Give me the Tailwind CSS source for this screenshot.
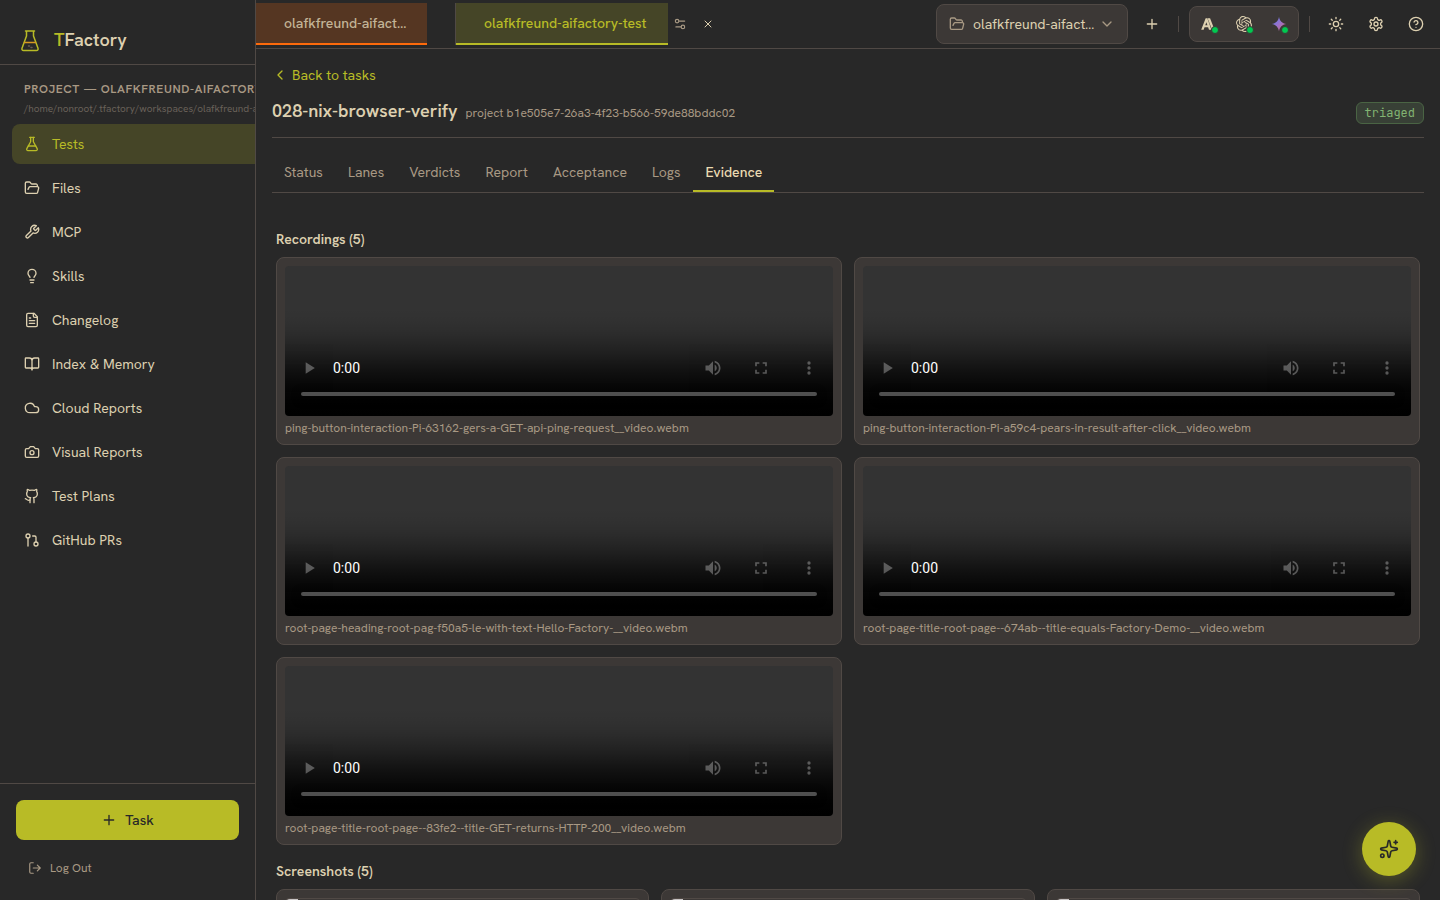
<!DOCTYPE html>
<html lang="en">
<head>
  <meta charset="UTF-8" />
  <meta name="viewport" content="width=device-width, initial-scale=1.0">
  <title>TFactory</title>
  <script src="https://cdn.jsdelivr.net/npm/@tailwindcss/browser@4"></script>
</head>
<body class="bg-[#282828] text-[#ddd0b0] font-['Hanken_Grotesk',Roboto,sans-serif] text-sm h-screen flex overflow-hidden">

  <!-- Sidebar -->
  <aside class="w-64 shrink-0 flex flex-col border-r border-[#504945] overflow-hidden">
    <div class="h-[65px] shrink-0 flex items-center gap-3 pl-[18px] pt-4 border-b border-[#504945]">
      <svg class="size-6" viewBox="0 0 24 24" fill="none" stroke="#b8bb26" stroke-width="1.5" stroke-linecap="round" stroke-linejoin="round">
        <path d="M7.500 3h9M8.500 3v5L4 20.200c-.4 1.200.3 2.300 1.500 2.300h13c1.200 0 1.900-1.100 1.500-2.300L15.500 8V3" />
        <path d="M6.500 14.500h11" stroke="#d79921" />
        <path d="M10.500 18h1M13 19.500h1" stroke="#665c54" />
      </svg>
      <span class="text-lg font-semibold"><span class="text-[#b8bb26]">T</span>Factory</span>
    </div>

    <div class="flex-1 pl-3 pt-4">
      <div class="pl-3 whitespace-nowrap">
        <h2 class="text-xs leading-4 font-semibold tracking-wider text-[#a89984]">PROJECT — OLAFKFREUND-AIFACTORY-TEST</h2>
        <p class="text-[10px] leading-[15px] mt-1 text-[#686159]">/home/nonroot/.tfactory/workspaces/olafkfreund-aifactory-test</p>
      </div>
      <nav class="mt-2 flex flex-col gap-1">
        <a href="#" class="h-10 flex items-center gap-3 px-3 rounded-l-lg bg-[#454527] text-[#b8bb26]">
          <svg class="size-4" viewBox="0 0 24 24" fill="none" stroke="currentColor" stroke-width="2" stroke-linecap="round" stroke-linejoin="round"><path d="M14 2v6a2 2 0 0 0 .245.960l5.510 10.080A2 2 0 0 1 18 22H6a2 2 0 0 1-1.755-2.960l5.510-10.080A2 2 0 0 0 10 8V2" /><path d="M6.453 15h11.094M8.500 2h7" /></svg>
          Tests
        </a>
        <a href="#" class="h-10 flex items-center gap-3 px-3">
          <svg class="size-4" viewBox="0 0 24 24" fill="none" stroke="currentColor" stroke-width="2" stroke-linecap="round" stroke-linejoin="round"><path d="m6 14 1.500-2.900A2 2 0 0 1 9.240 10H20a2 2 0 0 1 1.940 2.500l-1.540 6a2 2 0 0 1-1.950 1.500H4a2 2 0 0 1-2-2V5a2 2 0 0 1 2-2h3.900a2 2 0 0 1 1.690.9l.81 1.200a2 2 0 0 0 1.670.9H18a2 2 0 0 1 2 2v2" /></svg>
          Files
        </a>
        <a href="#" class="h-10 flex items-center gap-3 px-3">
          <svg class="size-4" viewBox="0 0 24 24" fill="none" stroke="currentColor" stroke-width="2" stroke-linecap="round" stroke-linejoin="round"><path d="M14.700 6.300a1 1 0 0 0 0 1.400l1.600 1.600a1 1 0 0 0 1.400 0l3.770-3.770a6 6 0 0 1-7.940 7.940l-6.910 6.910a2.120 2.120 0 0 1-3-3l6.910-6.910a6 6 0 0 1 7.940-7.940l-3.760 3.760z" /></svg>
          MCP
        </a>
        <a href="#" class="h-10 flex items-center gap-3 px-3">
          <svg class="size-4" viewBox="0 0 24 24" fill="none" stroke="currentColor" stroke-width="2" stroke-linecap="round" stroke-linejoin="round"><path d="M15 14c.2-1 .7-1.700 1.500-2.500 1-.9 1.500-2.200 1.500-3.500A6 6 0 0 0 6 8c0 1 .2 2.200 1.500 3.500.7.7 1.300 1.500 1.500 2.500M9 18h6M10 22h4" /></svg>
          Skills
        </a>
        <a href="#" class="h-10 flex items-center gap-3 px-3">
          <svg class="size-4" viewBox="0 0 24 24" fill="none" stroke="currentColor" stroke-width="2" stroke-linecap="round" stroke-linejoin="round"><path d="M15 2H6a2 2 0 0 0-2 2v16a2 2 0 0 0 2 2h12a2 2 0 0 0 2-2V7Z" /><path d="M14 2v4a2 2 0 0 0 2 2h4M10 9H8M16 13H8M16 17H8" /></svg>
          Changelog
        </a>
        <a href="#" class="h-10 flex items-center gap-3 px-3">
          <svg class="size-4" viewBox="0 0 24 24" fill="none" stroke="currentColor" stroke-width="2" stroke-linecap="round" stroke-linejoin="round"><path d="M12 7v14M3 18a1 1 0 0 1-1-1V4a1 1 0 0 1 1-1h5a4 4 0 0 1 4 4 4 4 0 0 1 4-4h5a1 1 0 0 1 1 1v13a1 1 0 0 1-1 1h-6a3 3 0 0 0-3 3 3 3 0 0 0-3-3z" /></svg>
          Index &amp; Memory
        </a>
        <a href="#" class="h-10 flex items-center gap-3 px-3">
          <svg class="size-4" viewBox="0 0 24 24" fill="none" stroke="currentColor" stroke-width="2" stroke-linecap="round" stroke-linejoin="round"><path d="M17.500 19H9a7 7 0 1 1 6.710-9h1.790a4.500 4.500 0 1 1 0 9Z" /></svg>
          Cloud Reports
        </a>
        <a href="#" class="h-10 flex items-center gap-3 px-3">
          <svg class="size-4" viewBox="0 0 24 24" fill="none" stroke="currentColor" stroke-width="2" stroke-linecap="round" stroke-linejoin="round"><path d="M14.500 4h-5L7 7H4a2 2 0 0 0-2 2v9a2 2 0 0 0 2 2h16a2 2 0 0 0 2-2V9a2 2 0 0 0-2-2h-3l-2.500-3z" /><circle cx="12" cy="13" r="3" /></svg>
          Visual Reports
        </a>
        <a href="#" class="h-10 flex items-center gap-3 px-3">
          <svg class="size-4" viewBox="0 0 24 24" fill="none" stroke="currentColor" stroke-width="2" stroke-linecap="round" stroke-linejoin="round"><path d="M15 22v-4a4.800 4.800 0 0 0-1-3.500c3 0 6-2 6-5.500.080-1.250-.270-2.480-1-3.500.280-1.150.280-2.350 0-3.500 0 0-1 0-3 1.500-2.640-.5-5.360-.5-8 0C6 2 5 2 5 2c-.3 1.150-.3 2.350 0 3.500A5.403 5.403 0 0 0 4 9c0 3.500 3 5.500 6 5.500-.390.490-.680 1.050-.850 1.650-.170.600-.220 1.230-.150 1.850v4" /><path d="M9 18c-4.510 2-5-2-7-2" /></svg>
          Test Plans
        </a>
        <a href="#" class="h-10 flex items-center gap-3 px-3">
          <svg class="size-4" viewBox="0 0 24 24" fill="none" stroke="currentColor" stroke-width="2" stroke-linecap="round" stroke-linejoin="round"><circle cx="18" cy="18" r="3" /><circle cx="6" cy="6" r="3" /><path d="M13 6h3a2 2 0 0 1 2 2v7M6 9v12" /></svg>
          GitHub PRs
        </a>
      </nav>
    </div>

    <div class="border-t border-[#504945] p-4">
      <button class="w-full h-10 rounded-lg bg-[#b8bb26] text-[#282828] font-medium flex items-center justify-center gap-2">
        <svg class="size-4" viewBox="0 0 24 24" fill="none" stroke="currentColor" stroke-width="2" stroke-linecap="round"><path d="M5 12h14M12 5v14" /></svg>
        Task
      </button>
      <button class="mt-3 h-8 px-3 flex items-center gap-2 text-xs text-[#a89984]">
        <svg class="size-[14px]" viewBox="0 0 24 24" fill="none" stroke="currentColor" stroke-width="2" stroke-linecap="round" stroke-linejoin="round"><path d="M9 21H5a2 2 0 0 1-2-2V5a2 2 0 0 1 2-2h4M16 17l5-5-5-5M21 12H9" /></svg>
        Log Out
      </button>
    </div>
  </aside>

  <div class="flex-1 min-w-0 flex flex-col">
    <!-- Top bar -->
    <header class="h-[49px] shrink-0 flex items-center border-b border-[#504945] pr-2">
      <div class="flex items-center flex-1 min-w-0">
        <button class="h-[42px] w-[171px] shrink-0 pl-7 pr-4 text-left truncate font-medium bg-[#553622] border-b-2 border-[#fe6a0b] text-[#c3b497]">olafkfreund-aifactory</button>
        <div class="ml-7 shrink-0 border-l border-[#504945]">
          <button class="h-[42px] w-[212px] pl-7 text-left whitespace-nowrap font-medium bg-[#454527] border-b-2 border-[#b8bb26] text-[#b8bb26] block">olafkfreund-aifactory-test</button>
        </div>
        <button class="size-6 flex items-center justify-center text-[#a89984]" aria-label="Project settings">
          <svg class="size-[14px]" viewBox="0 0 24 24" fill="none" stroke="currentColor" stroke-width="2" stroke-linecap="round" stroke-linejoin="round"><path d="M20 7h-9M14 17H5" /><circle cx="17" cy="17" r="3" /><circle cx="7" cy="7" r="3" /></svg>
        </button>
        <button class="size-6 ml-1 flex items-center justify-center" aria-label="Close tab">
          <svg class="size-3" viewBox="0 0 24 24" fill="none" stroke="currentColor" stroke-width="2" stroke-linecap="round"><path d="M18 6 6 18M6 6l12 12" /></svg>
        </button>
      </div>
      <button class="h-10 w-48 px-3 flex items-center gap-2 rounded-lg bg-[#3c3836] border border-[#504945]">
        <svg class="size-4 shrink-0 text-[#a89984]" viewBox="0 0 24 24" fill="none" stroke="currentColor" stroke-width="2" stroke-linecap="round" stroke-linejoin="round"><path d="m6 14 1.500-2.900A2 2 0 0 1 9.240 10H20a2 2 0 0 1 1.940 2.500l-1.540 6a2 2 0 0 1-1.950 1.500H4a2 2 0 0 1-2-2V5a2 2 0 0 1 2-2h3.900a2 2 0 0 1 1.690.9l.81 1.200a2 2 0 0 0 1.670.9H18a2 2 0 0 1 2 2v2" /></svg>
        <span class="truncate flex-1 text-left">olafkfreund-aifactory-test</span>
        <svg class="size-4 shrink-0 -ml-2 text-[#a89984]" viewBox="0 0 24 24" fill="none" stroke="currentColor" stroke-width="2" stroke-linecap="round" stroke-linejoin="round"><path d="m6 9 6 6 6-6" /></svg>
      </button>
      <button class="size-8 ml-2 flex items-center justify-center" aria-label="Add project">
        <svg class="size-4" viewBox="0 0 24 24" fill="none" stroke="currentColor" stroke-width="2" stroke-linecap="round"><path d="M5 12h14M12 5v14" /></svg>
      </button>
      <div class="w-px h-4 ml-[10px] bg-[#504945]"></div>
      <!-- Model providers -->
      <div class="h-9 w-[110px] ml-[10px] flex items-center justify-between px-[11px] rounded-lg bg-[#3c3836] border border-[#504945]">
        <button class="relative size-4" aria-label="Anthropic">
          <svg class="size-4" viewBox="0 0 24 24" fill="currentColor"><path d="M13.600 3.500h-3.700l6.700 17h3.700ZM7 3.500.3 20.500H4l1.300-3.500h5.400l1.300 3.500h3.600L9.500 3.500ZM6.400 14 8 9.200 9.700 14Z" /></svg>
          <span class="absolute -right-0.5 -bottom-0.5 size-2 rounded-full bg-[#00c950] border border-[#3c3836]"></span>
        </button>
        <button class="relative size-4" aria-label="OpenAI">
          <svg class="size-4" viewBox="0 0 24 24" fill="currentColor"><path d="M22.282 9.821a5.985 5.985 0 0 0-.516-4.910 6.046 6.046 0 0 0-6.510-2.900A6.065 6.065 0 0 0 4.981 4.182a5.985 5.985 0 0 0-3.998 2.900 6.046 6.046 0 0 0 .743 7.097 5.980 5.980 0 0 0 .510 4.911 6.051 6.051 0 0 0 6.515 2.900A5.985 5.985 0 0 0 13.260 24a6.056 6.056 0 0 0 5.772-4.206 5.990 5.990 0 0 0 3.997-2.900 6.056 6.056 0 0 0-.747-7.073zM13.260 22.430a4.476 4.476 0 0 1-2.876-1.040l.141-.081 4.779-2.758a.795.795 0 0 0 .392-.681v-6.737l2.020 1.168a.071.071 0 0 1 .038.052v5.583a4.504 4.504 0 0 1-4.494 4.494zM3.600 18.304a4.470 4.470 0 0 1-.535-3.014l.142.085 4.783 2.759a.771.771 0 0 0 .780 0l5.843-3.369v2.332a.080.080 0 0 1-.033.062L9.740 19.950a4.500 4.500 0 0 1-6.140-1.646zM2.340 7.896a4.485 4.485 0 0 1 2.366-1.973V11.600a.766.766 0 0 0 .388.676l5.815 3.355-2.020 1.168a.076.076 0 0 1-.071 0l-4.830-2.786A4.504 4.504 0 0 1 2.340 7.872zm16.597 3.855-5.833-3.387L15.119 7.200a.076.076 0 0 1 .071 0l4.830 2.791a4.494 4.494 0 0 1-.676 8.105v-5.678a.790.790 0 0 0-.407-.667zm2.010-3.023-.141-.085-4.774-2.782a.776.776 0 0 0-.785 0L9.409 9.230V6.897a.066.066 0 0 1 .028-.061l4.830-2.787a4.500 4.500 0 0 1 6.680 4.660zm-12.640 4.135-2.020-1.164a.080.080 0 0 1-.038-.057V6.075a4.500 4.500 0 0 1 7.375-3.453l-.142.080L8.704 5.460a.795.795 0 0 0-.393.681zm1.097-2.365 2.602-1.500 2.607 1.500v2.999l-2.597 1.500-2.607-1.500Z" /></svg>
          <span class="absolute -right-0.5 -bottom-0.5 size-2 rounded-full bg-[#00c950] border border-[#3c3836]"></span>
        </button>
        <button class="relative size-4" aria-label="Gemini">
          <svg class="size-4" viewBox="0 0 24 24"><defs><linearGradient id="gemini" x1="0" y1="0" x2="1" y2="1"><stop offset="0" stop-color="#4f7df0" /><stop offset=".5" stop-color="#9b72cb" /><stop offset="1" stop-color="#d96570" /></linearGradient></defs><path fill="url(#gemini)" d="M12 1c.8 6 5 10.200 11 11-6 .8-10.200 5-11 11-.8-6-5-10.200-11-11 6-.8 10.200-5 11-11Z" /></svg>
          <span class="absolute -right-0.5 -bottom-0.5 size-2 rounded-full bg-[#00c950] border border-[#3c3836]"></span>
        </button>
      </div>
      <div class="w-px h-4 ml-[10px] bg-[#504945]"></div>
      <div class="flex gap-2 ml-[10px]">
        <button class="size-8 flex items-center justify-center" aria-label="Theme">
          <svg class="size-4" viewBox="0 0 24 24" fill="none" stroke="currentColor" stroke-width="2" stroke-linecap="round"><circle cx="12" cy="12" r="4" /><path d="M12 2v2M12 20v2M4.930 4.930l1.410 1.410M17.660 17.660l1.410 1.410M2 12h2M20 12h2M6.340 17.660l-1.410 1.410M19.070 4.930l-1.410 1.410" /></svg>
        </button>
        <button class="size-8 flex items-center justify-center" aria-label="Settings">
          <svg class="size-4" viewBox="0 0 24 24" fill="none" stroke="currentColor" stroke-width="2" stroke-linecap="round" stroke-linejoin="round"><path d="M12.220 2h-.440a2 2 0 0 0-2 2v.180a2 2 0 0 1-1 1.730l-.430.250a2 2 0 0 1-2 0l-.150-.080a2 2 0 0 0-2.730.730l-.220.380a2 2 0 0 0 .730 2.730l.150.100a2 2 0 0 1 1 1.720v.510a2 2 0 0 1-1 1.740l-.150.090a2 2 0 0 0-.730 2.730l.220.380a2 2 0 0 0 2.730.730l.150-.080a2 2 0 0 1 2 0l.430.250a2 2 0 0 1 1 1.730V20a2 2 0 0 0 2 2h.440a2 2 0 0 0 2-2v-.180a2 2 0 0 1 1-1.730l.430-.250a2 2 0 0 1 2 0l.150.080a2 2 0 0 0 2.730-.730l.220-.390a2 2 0 0 0-.730-2.730l-.150-.080a2 2 0 0 1-1-1.740v-.500a2 2 0 0 1 1-1.740l.150-.090a2 2 0 0 0 .730-2.730l-.220-.380a2 2 0 0 0-2.730-.730l-.150.080a2 2 0 0 1-2 0l-.430-.250a2 2 0 0 1-1-1.730V4a2 2 0 0 0-2-2z" /><circle cx="12" cy="12" r="3" /></svg>
        </button>
        <button class="size-8 flex items-center justify-center" aria-label="Help">
          <svg class="size-4" viewBox="0 0 24 24" fill="none" stroke="currentColor" stroke-width="2" stroke-linecap="round" stroke-linejoin="round"><circle cx="12" cy="12" r="10" /><path d="M9.090 9a3 3 0 0 1 5.830 1c0 2-3 3-3 3M12 17h.010" /></svg>
        </button>
      </div>
    </header>

    <main class="flex-1 min-h-0 overflow-hidden px-4 pt-4">
      <a href="#" class="flex items-center gap-1 text-[#b8bb26]">
        <svg class="size-4" viewBox="0 0 24 24" fill="none" stroke="currentColor" stroke-width="2" stroke-linecap="round" stroke-linejoin="round"><path d="m15 18-6-6 6-6" /></svg>
        Back to tasks
      </a>

      <div class="mt-3 pb-3 flex items-center justify-between border-b border-[#504945]">
        <div class="flex items-baseline gap-2">
          <h1 class="text-lg leading-7 font-semibold">028-nix-browser-verify</h1>
          <span class="text-xs text-[#a89984]">project b1e505e7-26a3-4f23-b566-59de88bddc02</span>
        </div>
        <span class="mt-1 px-2 py-px rounded-md border border-[#4a6444] bg-[#384036] text-[#82b472] text-xs leading-[18px] font-['JetBrains_Mono','Liberation_Mono',monospace]">triaged</span>
      </div>

      <nav class="mt-4 flex gap-px border-b border-[#504945] text-[#a89984]">
        <a href="#" class="px-3 py-2 border-b-2 border-transparent">Status</a>
        <a href="#" class="px-3 py-2 border-b-2 border-transparent">Lanes</a>
        <a href="#" class="px-3 py-2 border-b-2 border-transparent">Verdicts</a>
        <a href="#" class="px-3 py-2 border-b-2 border-transparent">Report</a>
        <a href="#" class="px-3 py-2 border-b-2 border-transparent">Acceptance</a>
        <a href="#" class="px-3 py-2 border-b-2 border-transparent">Logs</a>
        <a href="#" class="px-3 py-2 border-b-2 border-[#b8bb26] text-[#ebdbb2] font-medium">Evidence</a>
      </nav>

      <section class="mt-9 px-1">
        <h3 class="font-semibold leading-5">Recordings (5)</h3>
        <div class="mt-2 grid grid-cols-2 gap-3 text-xs text-[#a89984]">
          <figure class="p-2 rounded-lg border border-[#504945] bg-[#3c3836]">
            <video controls class="w-full rounded"></video>
            <figcaption class="mt-1">ping-button-interaction-Pi-63162-gers-a-GET-api-ping-request__video.webm</figcaption>
          </figure>
          <figure class="p-2 rounded-lg border border-[#504945] bg-[#3c3836]">
            <video controls class="w-full rounded"></video>
            <figcaption class="mt-1">ping-button-interaction-Pi-a59c4-pears-in-result-after-click__video.webm</figcaption>
          </figure>
          <figure class="p-2 rounded-lg border border-[#504945] bg-[#3c3836]">
            <video controls class="w-full rounded"></video>
            <figcaption class="mt-1">root-page-heading-root-pag-f50a5-le-with-text-Hello-Factory-__video.webm</figcaption>
          </figure>
          <figure class="p-2 rounded-lg border border-[#504945] bg-[#3c3836]">
            <video controls class="w-full rounded"></video>
            <figcaption class="mt-1">root-page-title-root-page--674ab--title-equals-Factory-Demo-__video.webm</figcaption>
          </figure>
          <figure class="p-2 rounded-lg border border-[#504945] bg-[#3c3836]">
            <video controls class="w-full rounded"></video>
            <figcaption class="mt-1">root-page-title-root-page--83fe2--title-GET-returns-HTTP-200__video.webm</figcaption>
          </figure>
        </div>
      </section>

      <section class="mt-4 px-1">
        <h3 class="font-semibold leading-5">Screenshots (5)</h3>
        <div class="mt-2 grid grid-cols-3 gap-3">
          <div class="h-40 p-2 rounded-lg border border-[#504945] bg-[#3c3836]"><div class="h-full rounded border border-[#504945]"><div class="w-3 h-2 rounded-tl bg-[#c8c4c4]"></div></div></div>
          <div class="h-40 p-2 rounded-lg border border-[#504945] bg-[#3c3836]"><div class="h-full rounded border border-[#504945]"><div class="w-3 h-2 rounded-tl bg-[#c8c4c4]"></div></div></div>
          <div class="h-40 p-2 rounded-lg border border-[#504945] bg-[#3c3836]"><div class="h-full rounded border border-[#504945]"><div class="w-3 h-2 rounded-tl bg-[#c8c4c4]"></div></div></div>
        </div>
      </section>
    </main>
  </div>

  <button class="fixed right-6 bottom-6 size-[54px] rounded-full bg-[#b8bb26] text-[#282828] shadow-[0_4px_20px_#b8bb2655] flex items-center justify-center" aria-label="Assistant">
    <svg class="size-5" viewBox="0 0 24 24" fill="none" stroke="currentColor" stroke-width="2" stroke-linecap="round" stroke-linejoin="round"><path d="M11.017 2.814a1 1 0 0 1 1.966 0l1.051 5.558a2 2 0 0 0 1.594 1.594l5.558 1.051a1 1 0 0 1 0 1.966l-5.558 1.051a2 2 0 0 0-1.594 1.594l-1.051 5.558a1 1 0 0 1-1.966 0l-1.051-5.558a2 2 0 0 0-1.594-1.594l-5.558-1.051a1 1 0 0 1 0-1.966l5.558-1.051a2 2 0 0 0 1.594-1.594zM20 2v4M22 4h-4" /><circle cx="4" cy="20" r="2" /></svg>
  </button>

</body>
</html>
